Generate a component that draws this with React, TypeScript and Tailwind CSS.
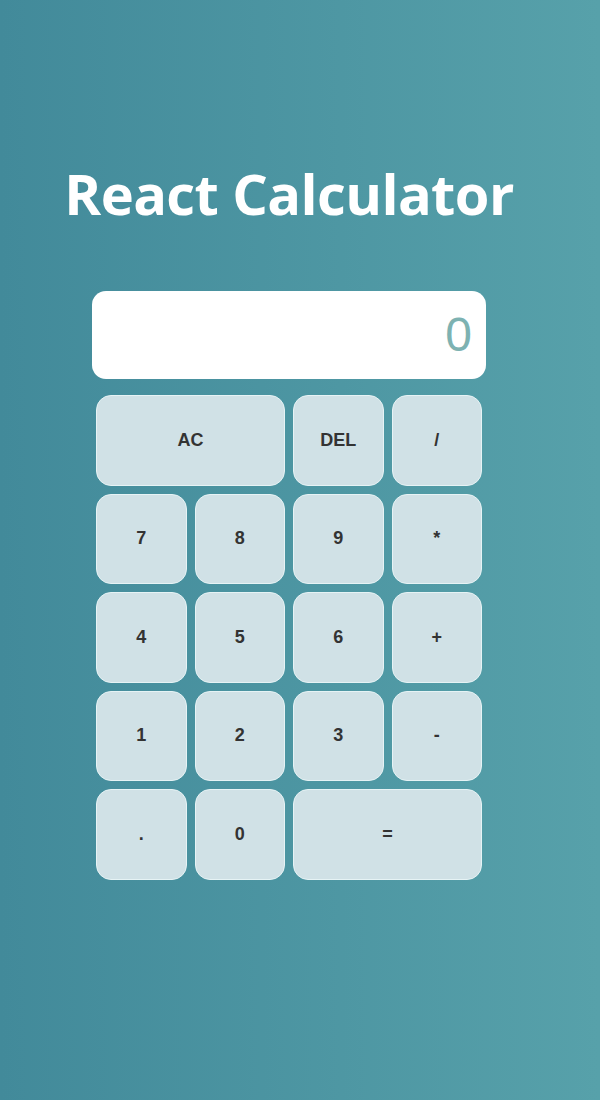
import React, { useState } from 'react';

const keys: { label: string; wide?: boolean }[] = [
  { label: 'AC', wide: true },
  { label: 'DEL' },
  { label: '/' },
  { label: '7' },
  { label: '8' },
  { label: '9' },
  { label: '*' },
  { label: '4' },
  { label: '5' },
  { label: '6' },
  { label: '+' },
  { label: '1' },
  { label: '2' },
  { label: '3' },
  { label: '-' },
  { label: '.' },
  { label: '0' },
  { label: '=', wide: true },
];

export default function App() {
  const [value, setValue] = useState('0');

  const press = (k: string) => {
    if (k === 'AC') return setValue('0');
    if (k === 'DEL') return setValue(v => (v.length > 1 ? v.slice(0, -1) : '0'));
    if (k === '=') {
      try {
        // eslint-disable-next-line no-new-func
        const r = Function(`return (${value})`)();
        setValue(String(r));
      } catch {
        setValue('0');
      }
      return;
    }
    setValue(v => (v === '0' && k !== '.' ? k : v + k));
  };

  return (
    <div className="min-h-[1100px] w-full bg-linear-to-r from-[#428a9a] to-[#57a1aa] font-['Liberation_Sans',Arial,sans-serif]">
      <div className="ml-[92px] w-[394px] pt-[153px]">
        <div className="flex justify-center">
          <h1 className="whitespace-nowrap font-['Open_Sans',sans-serif] text-[56px] font-bold leading-[80px] text-white tracking-[-0.6px]">
            React Calculator
          </h1>
        </div>

        <div className="mt-[58px] flex h-[88px] items-center justify-end rounded-[14px] bg-white px-[14px] text-[48px] font-light text-[#7db2b2]">
          {value}
        </div>

        <div className="mt-[12px] grid grid-cols-4 auto-rows-[98.5px]">
          {keys.map(k => (
            <button
              key={k.label}
              type="button"
              onClick={() => press(k.label)}
              className={`m-1 rounded-[15px] border border-[#e6f3f5] bg-[#d0e1e6] text-[18px] font-bold text-[#333] ${
                k.wide ? 'col-span-2' : ''
              }`}
            >
              {k.label}
            </button>
          ))}
        </div>
      </div>
    </div>
  );
}
